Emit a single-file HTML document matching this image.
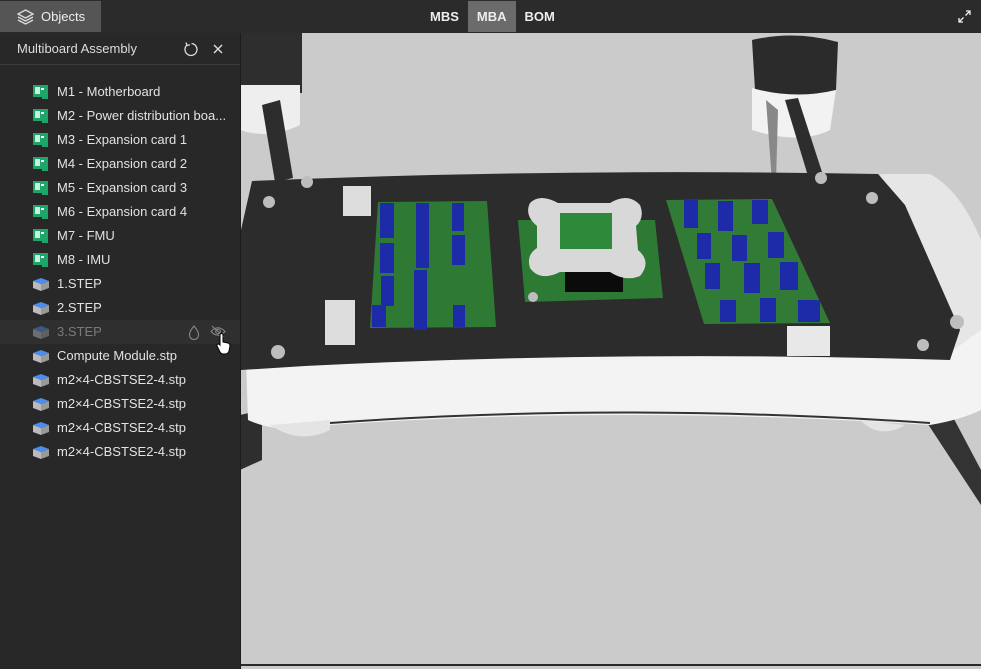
<!DOCTYPE html>
<html><head><meta charset="utf-8"><style>
*{margin:0;padding:0;box-sizing:border-box}
body{width:981px;height:669px;overflow:hidden;background:#cbcbcb;font-family:"Liberation Sans",sans-serif;position:relative}
#top{position:absolute;left:0;top:0;width:981px;height:33px;background:#2b2b2b}
#objbtn{position:absolute;left:0;top:1px;width:101px;height:31px;background:#555;color:#eee;font-size:13px;line-height:31px;padding-left:41px}
#tabs{position:absolute;left:421px;top:1px;height:31px;display:flex;color:#eee;font-size:13px;font-weight:bold}
#tabs div{padding:0 9px;line-height:31px}
#tabs .on{background:#6b6b6b}
#panel{position:absolute;left:0;top:33px;width:241px;height:636px;background:#282828;border-right:1px solid #1c1c1c}
#hdr{height:32px;border-bottom:1px solid #3a3a3a;color:#ddd;font-size:13px;line-height:32px;padding-left:17px;position:relative}
.row{position:absolute;left:0;width:240px;height:24px;color:#e2e2e2;font-size:13px;line-height:24px;padding-left:57px;white-space:nowrap}
.row.dim{background:#2f2f2f;color:#7a7a7a}
.ic{position:absolute;left:33px;top:5px;width:16px;height:14px}
</style></head><body>
<div id="top">
 <div id="objbtn">
  <svg style="position:absolute;left:17px;top:8px" width="17" height="16" viewBox="0 0 17 16" fill="none" stroke="#ddd" stroke-width="1.3"><path d="M8.5 1 L16 5 L8.5 9 L1 5Z"/><path d="M1 8 L8.5 12 L16 8"/><path d="M1 11 L8.5 15 L16 11"/></svg>
  Objects</div>
 <div id="tabs"><div>MBS</div><div class="on">MBA</div><div>BOM</div></div>
 <svg style="position:absolute;left:957px;top:9px" width="15" height="15" viewBox="0 0 15 15" stroke="#eee" stroke-width="1.3" fill="none"><path d="M9 2H13V6M13 2L8.5 6.5M6 13H2V9M2 13L6.5 8.5"/></svg>
</div>

<svg style="position:absolute;left:241px;top:33px" width="740" height="633" viewBox="241 33 740 633">
 <rect x="240" y="33" width="62" height="60" fill="#2e2e2e"/>
 <path d="M240 85 H300 V125 Q270 140 240 130Z" fill="#eee"/>
 <path d="M262 105 L280 100 L293 178 L275 182Z" fill="#2d2d2d"/>
 <path d="M752 40 Q795 30 838 42 L836 90 Q795 100 755 90Z" fill="#2b2b2b"/>
 <path d="M752 88 Q795 100 836 90 L830 130 Q800 145 752 130Z" fill="#f2f2f2"/>
 <path d="M766 100 L772 182 L776 182 L778 110Z" fill="#888"/>
 <path d="M785 100 L798 98 L822 172 L808 176Z" fill="#2d2d2d"/>
 <path d="M240 415 L262 410 L262 460 L240 470Z" fill="#2e2e2e"/>
 <path d="M920 412 L945 402 L981 470 L981 505Z" fill="#333"/>
 <path d="M245 330 L960 320 L981 300 L981 410 Q960 420 930 425 Q620 405 330 425 Q280 435 248 420Z" fill="#f3f3f3"/>
 <path d="M880 174 L930 174 Q960 190 981 240 L981 330 L940 360Z" fill="#e6e6e6"/>
 <path d="M270 425 Q300 445 330 430 L330 420Z" fill="#e4e4e4"/>
 <path d="M860 420 Q880 440 905 425Z" fill="#e4e4e4"/>
 <path d="M330 423 Q620 402 930 423" stroke="#333" stroke-width="2" fill="none"/>
 <path d="M252 181 Q560 168 878 174 L905 205 L960 330 L950 360 Q620 350 305 366 L241 370 L241 230Z" fill="#2c2c2c"/>
 <path d="M378 202 L487 201 L496 327 L370 328Z" fill="#2e7a35"/>
 <path d="M518 220 L655 220 L663 298 L525 302Z" fill="#2c7a33"/>
 <path d="M666 200 L772 199 L830 323 L704 324Z" fill="#327b36"/>
 <g fill="#1e2ba8">
  <rect x="380" y="203" width="14" height="35"/><rect x="416" y="203" width="13" height="65"/><rect x="452" y="203" width="12" height="28"/>
  <rect x="380" y="243" width="14" height="30"/><rect x="452" y="235" width="13" height="30"/><rect x="381" y="276" width="13" height="30"/>
  <rect x="414" y="270" width="13" height="60"/><rect x="453" y="305" width="12" height="22"/><rect x="372" y="305" width="14" height="22"/>
  <rect x="684" y="200" width="14" height="28"/><rect x="718" y="201" width="15" height="30"/><rect x="752" y="200" width="16" height="24"/>
  <rect x="697" y="233" width="14" height="26"/><rect x="732" y="235" width="15" height="26"/><rect x="768" y="232" width="16" height="26"/>
  <rect x="705" y="263" width="15" height="26"/><rect x="744" y="263" width="16" height="30"/><rect x="780" y="262" width="18" height="28"/>
  <rect x="720" y="300" width="16" height="22"/><rect x="760" y="298" width="16" height="24"/><rect x="798" y="300" width="22" height="22"/>
 </g>
 <rect x="565" y="266" width="58" height="26" fill="#0b0b0b"/>
 <path d="M530 203 Q540 193 558 203 L610 203 Q628 192 640 205 Q645 218 636 226 L638 250 Q652 262 640 276 Q625 282 610 272 L560 272 Q540 282 530 268 Q526 255 537 248 L537 226 Q524 215 530 203Z" fill="#d8d8d8"/>
 <rect x="560" y="213" width="52" height="36" fill="#2e8a3a"/>
 <rect x="343" y="186" width="28" height="30" fill="#ddd"/>
 <rect x="325" y="300" width="30" height="45" fill="#ddd"/>
 <rect x="787" y="326" width="43" height="30" fill="#e8e8e8"/>
 <g fill="#bdbdbd"><circle cx="307" cy="182" r="6"/><circle cx="269" cy="202" r="6"/><circle cx="278" cy="352" r="7"/><circle cx="821" cy="178" r="6"/><circle cx="872" cy="198" r="6"/><circle cx="957" cy="322" r="7"/><circle cx="923" cy="345" r="6"/><circle cx="533" cy="297" r="5"/></g>
 <rect x="241" y="664" width="740" height="5" fill="#2a2a2a"/>
</svg>

<div id="panel">
 <div id="hdr">Multiboard Assembly
  <svg style="position:absolute;left:183px;top:8px" width="17" height="17" viewBox="0 0 17 17" fill="none" stroke="#ddd" stroke-width="1.3"><path d="M4 4 A6 6 0 1 0 8.5 2.5"/><path d="M3 1.5 L4 4.5 L7 3.8"/></svg>
  <svg style="position:absolute;left:212px;top:10px" width="12" height="12" viewBox="0 0 12 12" stroke="#ddd" stroke-width="1.4"><path d="M2 2L10 10M10 2L2 10"/></svg>
 </div>
</div>

<div style="position:absolute;left:0;top:0">
 <div class="row" style="top:80px"><svg class="ic" viewBox="0 0 16 14"><rect x="0" y="0" width="15" height="12" fill="#1ea56a"/><rect x="2" y="2" width="5" height="7" fill="#c9f0dc"/><rect x="8" y="3" width="3" height="2" fill="#fff"/><rect x="9" y="11" width="6" height="3" fill="#1ea56a"/></svg>M1 - Motherboard</div>
 <div class="row" style="top:104px"><svg class="ic" viewBox="0 0 16 14"><rect x="0" y="0" width="15" height="12" fill="#1ea56a"/><rect x="2" y="2" width="5" height="7" fill="#c9f0dc"/><rect x="8" y="3" width="3" height="2" fill="#fff"/><rect x="9" y="11" width="6" height="3" fill="#1ea56a"/></svg>M2 - Power distribution boa...</div>
 <div class="row" style="top:128px"><svg class="ic" viewBox="0 0 16 14"><rect x="0" y="0" width="15" height="12" fill="#1ea56a"/><rect x="2" y="2" width="5" height="7" fill="#c9f0dc"/><rect x="8" y="3" width="3" height="2" fill="#fff"/><rect x="9" y="11" width="6" height="3" fill="#1ea56a"/></svg>M3 - Expansion card 1</div>
 <div class="row" style="top:152px"><svg class="ic" viewBox="0 0 16 14"><rect x="0" y="0" width="15" height="12" fill="#1ea56a"/><rect x="2" y="2" width="5" height="7" fill="#c9f0dc"/><rect x="8" y="3" width="3" height="2" fill="#fff"/><rect x="9" y="11" width="6" height="3" fill="#1ea56a"/></svg>M4 - Expansion card 2</div>
 <div class="row" style="top:176px"><svg class="ic" viewBox="0 0 16 14"><rect x="0" y="0" width="15" height="12" fill="#1ea56a"/><rect x="2" y="2" width="5" height="7" fill="#c9f0dc"/><rect x="8" y="3" width="3" height="2" fill="#fff"/><rect x="9" y="11" width="6" height="3" fill="#1ea56a"/></svg>M5 - Expansion card 3</div>
 <div class="row" style="top:200px"><svg class="ic" viewBox="0 0 16 14"><rect x="0" y="0" width="15" height="12" fill="#1ea56a"/><rect x="2" y="2" width="5" height="7" fill="#c9f0dc"/><rect x="8" y="3" width="3" height="2" fill="#fff"/><rect x="9" y="11" width="6" height="3" fill="#1ea56a"/></svg>M6 - Expansion card 4</div>
 <div class="row" style="top:224px"><svg class="ic" viewBox="0 0 16 14"><rect x="0" y="0" width="15" height="12" fill="#1ea56a"/><rect x="2" y="2" width="5" height="7" fill="#c9f0dc"/><rect x="8" y="3" width="3" height="2" fill="#fff"/><rect x="9" y="11" width="6" height="3" fill="#1ea56a"/></svg>M7 - FMU</div>
 <div class="row" style="top:248px"><svg class="ic" viewBox="0 0 16 14"><rect x="0" y="0" width="15" height="12" fill="#1ea56a"/><rect x="2" y="2" width="5" height="7" fill="#c9f0dc"/><rect x="8" y="3" width="3" height="2" fill="#fff"/><rect x="9" y="11" width="6" height="3" fill="#1ea56a"/></svg>M8 - IMU</div>
 <div class="row" style="top:272px"><svg class="ic" viewBox="0 0 16 14"><path d="M0 4 L8 1 L16 4 L8 7Z" fill="#4a8cf0"/><path d="M0 4 L8 7 L8 14 L0 11Z" fill="#bbb"/><path d="M16 4 L8 7 L8 14 L16 11Z" fill="#999"/></svg>1.STEP</div>
 <div class="row" style="top:296px"><svg class="ic" viewBox="0 0 16 14"><path d="M0 4 L8 1 L16 4 L8 7Z" fill="#4a8cf0"/><path d="M0 4 L8 7 L8 14 L0 11Z" fill="#bbb"/><path d="M16 4 L8 7 L8 14 L16 11Z" fill="#999"/></svg>2.STEP</div>
 <div class="row dim" style="top:320px"><svg class="ic" viewBox="0 0 16 14" opacity="0.45"><path d="M0 4 L8 1 L16 4 L8 7Z" fill="#4a8cf0"/><path d="M0 4 L8 7 L8 14 L0 11Z" fill="#bbb"/><path d="M16 4 L8 7 L8 14 L16 11Z" fill="#999"/></svg>3.STEP
  <svg style="position:absolute;left:188px;top:5px" width="12" height="15" viewBox="0 0 12 15" fill="none" stroke="#888" stroke-width="1.1"><path d="M6 1 Q1 7 1.5 10 A4.5 4.5 0 0 0 10.5 10 Q11 7 6 1Z"/></svg>
  <svg style="position:absolute;left:210px;top:5px" width="16" height="13" viewBox="0 0 16 13" fill="none" stroke="#888" stroke-width="1.1"><path d="M1 6.5 Q8 -1 15 6.5 Q8 14 1 6.5Z"/><circle cx="8" cy="6.5" r="2.3"/><path d="M2 1 L14 12"/></svg>
  <svg style="position:absolute;left:216px;top:13px" width="16" height="22" viewBox="0 0 16 22"><path d="M4 2 Q4 0.5 5.5 0.5 Q7 0.5 7 2 V9 L12 10 Q14 10.5 14 13 L13 18 Q12 21 9 21 H7 Q5 21 4 19 L1 13 Q0.5 11.5 2 11 Q3 10.8 4 12Z" fill="#fff" stroke="#000" stroke-width="1"/></svg>
 </div>
 <div class="row" style="top:344px"><svg class="ic" viewBox="0 0 16 14"><path d="M0 4 L8 1 L16 4 L8 7Z" fill="#4a8cf0"/><path d="M0 4 L8 7 L8 14 L0 11Z" fill="#bbb"/><path d="M16 4 L8 7 L8 14 L16 11Z" fill="#999"/></svg>Compute Module.stp</div>
 <div class="row" style="top:368px"><svg class="ic" viewBox="0 0 16 14"><path d="M0 4 L8 1 L16 4 L8 7Z" fill="#4a8cf0"/><path d="M0 4 L8 7 L8 14 L0 11Z" fill="#bbb"/><path d="M16 4 L8 7 L8 14 L16 11Z" fill="#999"/></svg>m2×4-CBSTSE2-4.stp</div>
 <div class="row" style="top:392px"><svg class="ic" viewBox="0 0 16 14"><path d="M0 4 L8 1 L16 4 L8 7Z" fill="#4a8cf0"/><path d="M0 4 L8 7 L8 14 L0 11Z" fill="#bbb"/><path d="M16 4 L8 7 L8 14 L16 11Z" fill="#999"/></svg>m2×4-CBSTSE2-4.stp</div>
 <div class="row" style="top:416px"><svg class="ic" viewBox="0 0 16 14"><path d="M0 4 L8 1 L16 4 L8 7Z" fill="#4a8cf0"/><path d="M0 4 L8 7 L8 14 L0 11Z" fill="#bbb"/><path d="M16 4 L8 7 L8 14 L16 11Z" fill="#999"/></svg>m2×4-CBSTSE2-4.stp</div>
 <div class="row" style="top:440px"><svg class="ic" viewBox="0 0 16 14"><path d="M0 4 L8 1 L16 4 L8 7Z" fill="#4a8cf0"/><path d="M0 4 L8 7 L8 14 L0 11Z" fill="#bbb"/><path d="M16 4 L8 7 L8 14 L16 11Z" fill="#999"/></svg>m2×4-CBSTSE2-4.stp</div>
</div>
</body></html>
